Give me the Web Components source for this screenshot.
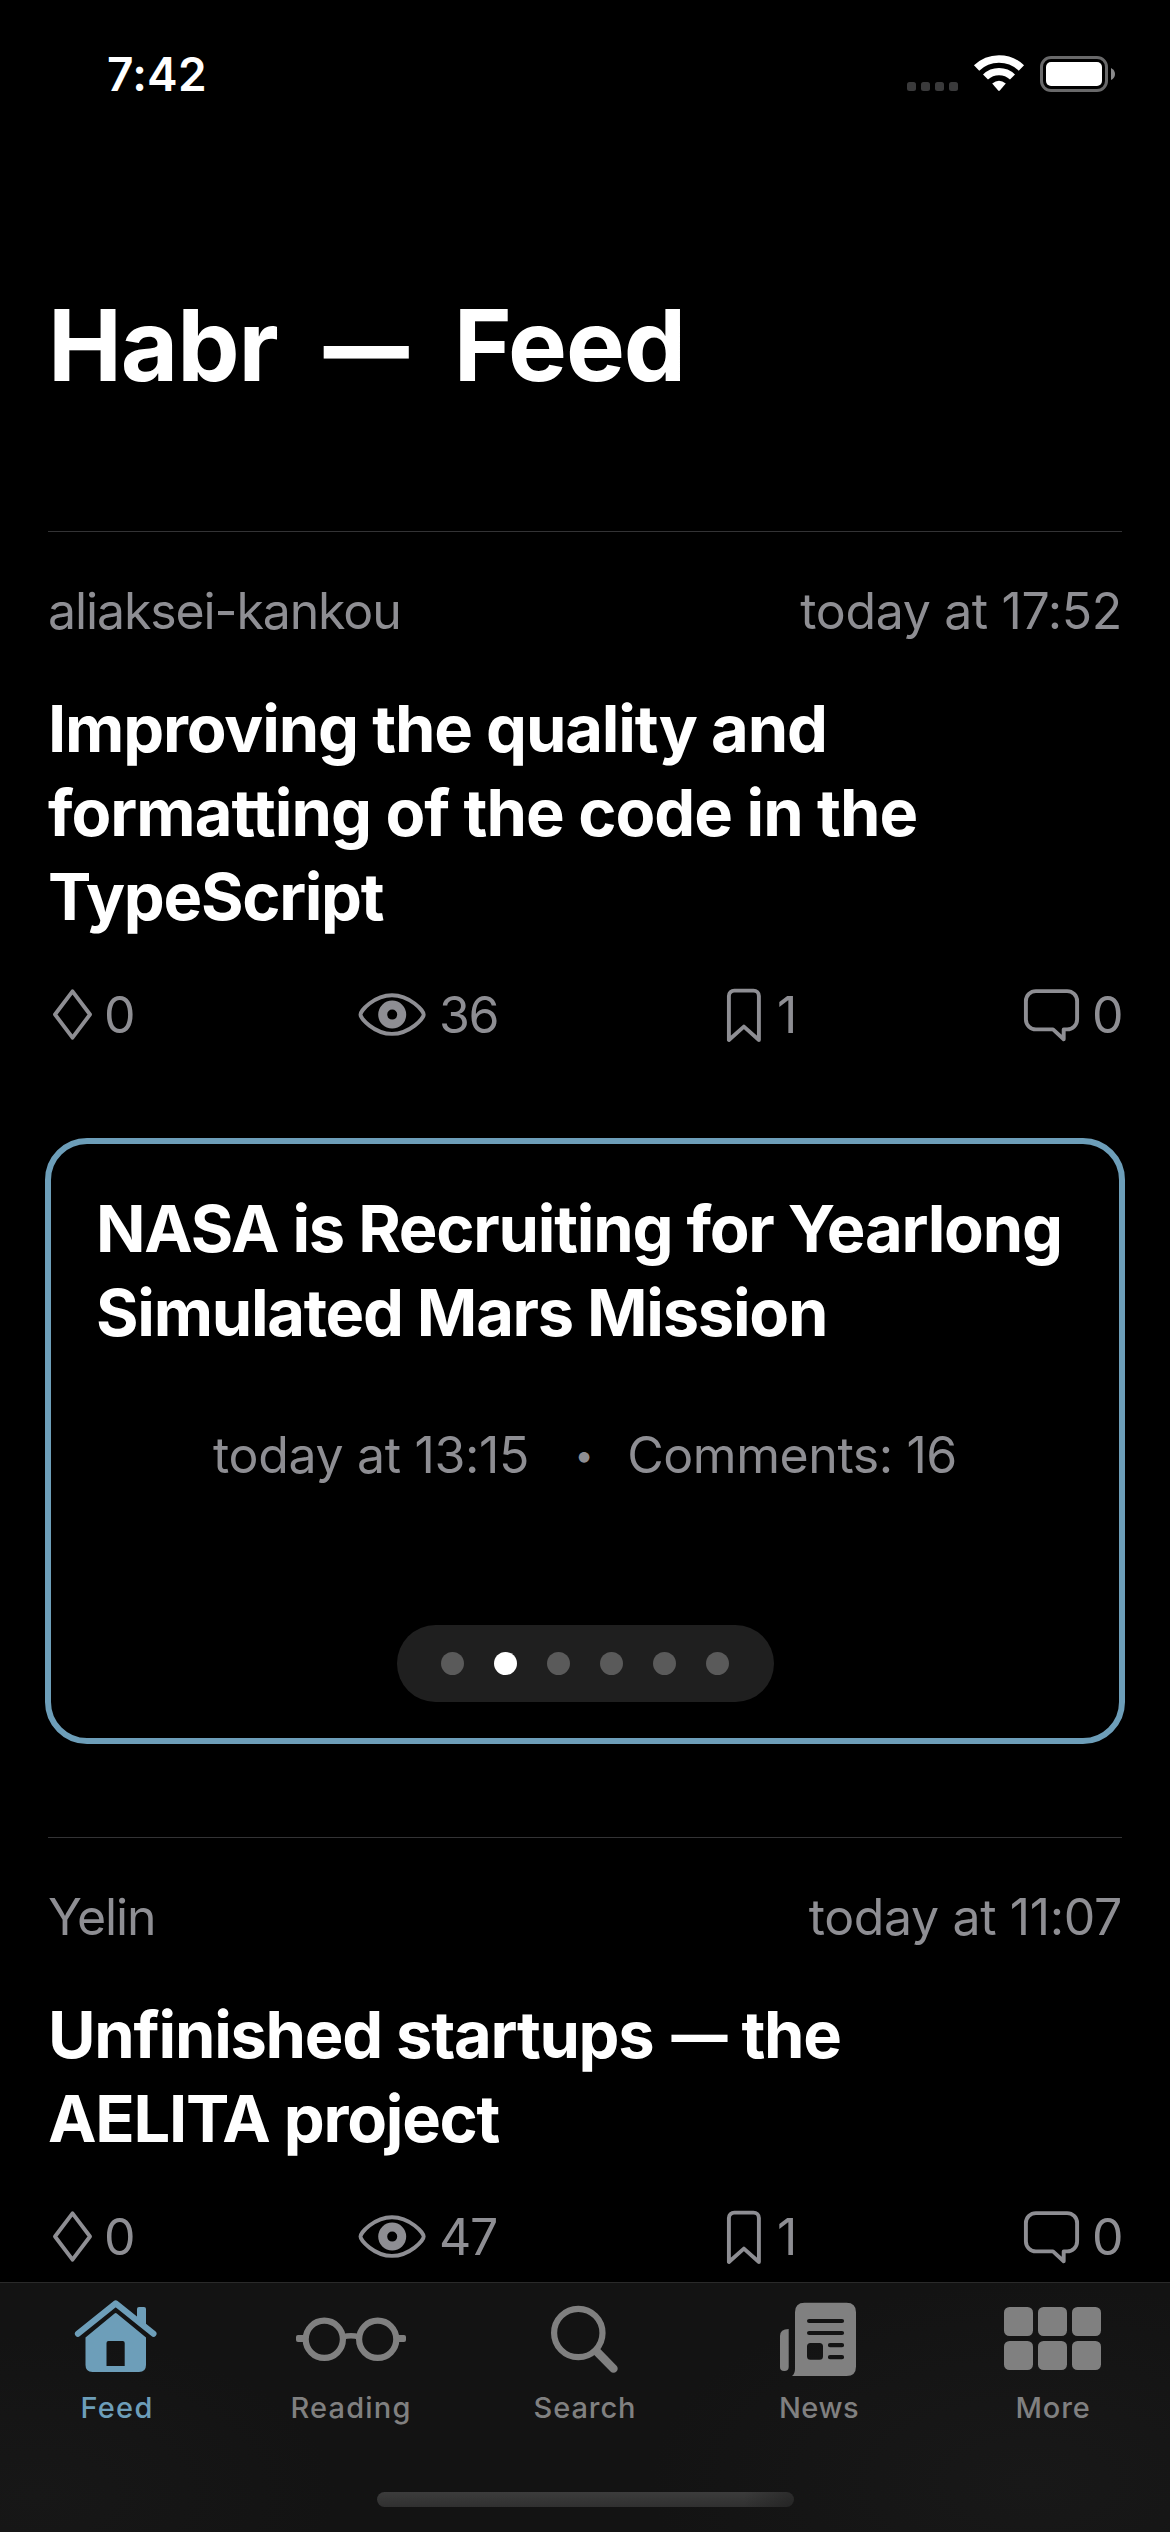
<!DOCTYPE html>
<html lang="en">
<head>
<meta charset="utf-8">
<title>Habr — Feed</title>
<style>
html,body{margin:0;background:#000}
body{width:1170px;height:2532px;overflow:hidden;font-family:Inter,"Liberation Sans",sans-serif;color:#fff}
</style>
</head>
<body>
<habr-app>
  <status-bar slot="status">7:42</status-bar>
  <page-title>Habr&nbsp; <span>—</span> &nbsp;Feed</page-title>
  <feed-article author="aliaksei-kankou" author-track="-1.12" time="today at 17:52" time-track="-0.36" votes="0" views="36" saves="1" comments="0">
    <title-line track="-1.15">Improving the quality and</title-line>
    <title-line track="-0.98">formatting of the code in the</title-line>
    <title-line track="-1.3">TypeScript</title-line>
  </feed-article>
  <news-card time="today at 13:15" comments="Comments: 16" pages="6" current="2">
    <title-line track="-1.23">NASA is Recruiting for Yearlong</title-line>
    <title-line track="-1.27">Simulated Mars Mission</title-line>
  </news-card>
  <feed-article author="Yelin" author-track="-1.12" time="today at 11:07" time-track="-0.36" votes="0" views="47" saves="1" comments="0">
    <title-line track="-1.28">Unfinished startups <span style="font-size:56px;font-weight:800;vertical-align:3px;line-height:0;margin:0 1px 0 4px">—</span> the</title-line>
    <title-line track="-1.25">AELITA project</title-line>
  </feed-article>
  <tab-bar slot="tabs">
    <tab-item icon="home" track="1.3" active>Feed</tab-item>
    <tab-item icon="glasses" track="1.19">Reading</tab-item>
    <tab-item icon="search" track="0.92">Search</tab-item>
    <tab-item icon="news" track="0.49">News</tab-item>
    <tab-item icon="grid" track="0.89">More</tab-item>
  </tab-bar>
</habr-app>
<script>
const define = (name, render) => customElements.define(name, class extends HTMLElement {
  constructor() {
    super();
    this.attachShadow({ mode: 'open' });
  }
  connectedCallback() {
    this.shadowRoot.innerHTML = render(this);
  }
});
const at = (el, name) => el.getAttribute(name) || '';

define('habr-app', () => `
<style>
:host{display:flex;flex-direction:column;width:1170px;height:2532px;background:#000}
main{flex:1;min-height:0;overflow:hidden;display:flex;flex-direction:column}
</style>
<slot name="status"></slot><main><slot></slot></main><slot name="tabs"></slot>`);

define('status-bar', () => `
<style>
:host{display:flex;justify-content:space-between;align-items:flex-start;box-sizing:border-box;height:141px;padding:53px 52px 0 107px}
time{font-size:46px;font-weight:600;line-height:42px;letter-spacing:.25px}
svg{display:block}
</style>
<time><slot></slot></time>
<svg width="211" height="40" viewBox="907 53 211 40" fill="none">
  <g fill="#3a3a3b"><rect x="907" y="82" width="9" height="9" rx="2.5"/><rect x="921" y="82" width="9" height="9" rx="2.5"/><rect x="935" y="82" width="9" height="9" rx="2.5"/><rect x="949" y="82" width="9" height="9" rx="2.5"/></g>
  <g stroke="#fff"><path stroke-width="7.6" d="M976.6 68A32.2 32.2 0 0 1 1021.4 68"/><path stroke-width="7.2" d="M985.5 77A19.5 19.5 0 0 1 1012.5 77"/></g>
  <path fill="#fff" d="M992.2 83.6Q999 77.8 1005.8 83.6L999.8 90.5Q999 91.3 998.2 90.5Z"/>
  <rect x="1041.5" y="57.5" width="65" height="33" rx="9.5" stroke="#69696a" stroke-width="3"/>
  <rect x="1046" y="62" width="56" height="24" rx="5" fill="#fff"/>
  <path fill="#8a8a8b" d="M1111 68Q1115 70 1115 74T1111 80Z"/>
</svg>`);

define('page-title', () => `
<style>
:host{display:block;margin:144px 48px 126px;font-size:99px;font-weight:700;line-height:120px;letter-spacing:-1.1px;word-spacing:.7px;white-space:nowrap}
::slotted(span){font-size:85px;font-weight:900;line-height:0;vertical-align:4px}
</style><slot></slot>`);

define('title-line', el => `
<style>:host{display:block;height:84px;font-size:65px;font-weight:700;line-height:84px;white-space:nowrap;letter-spacing:${at(el, 'track')}px}</style><slot></slot>`);

const statIcons = {
  votes: [56, '<path d="M24.5 6.3L42 29.5L24.5 52.7L7 29.5Z"/>'],
  views: [85, '<path d="M6.5 29.6C6.5 26 20 10.2 38 10.2S69.7 26 69.7 29.6 56 48.9 38 48.9 6.5 33.2 6.5 29.6Z"/><circle cx="38.2" cy="29.6" r="9.5" stroke-width="9"/>'],
  saves: [55, '<path d="M6.9 55V11a5.4 5.4 0 0 1 5.4-5.4H31.5A5.4 5.4 0 0 1 36.9 11V55L21.9 41.6Z"/>'],
  comments: [72, '<path d="M16 6.1H47A10 10 0 0 1 57.1 16V34.5A10 10 0 0 1 47 44.4H43.7V54.2L33 44.4H16A10 10 0 0 1 5.9 34.5V16A10 10 0 0 1 16 6.1Z"/>']
};

define('stat-item', el => {
  const [w, art] = statIcons[at(el, 'kind')];
  return `
<style>
:host{display:flex;height:60px;font-size:50px;line-height:60px;letter-spacing:-1.3px}
svg{display:block;flex:none}
</style>
<svg width="${w}" height="60" fill="none" stroke="currentColor" stroke-width="3.9" stroke-linejoin="round">${art}</svg><span><slot></slot></span>`;
});

define('feed-article', el => `
<style>
:host{display:flex;flex-direction:column;margin:0 48px;border-top:1px solid #333335}
header{display:flex;justify-content:space-between;margin-top:49px;font-size:50px;line-height:60px;color:#8e8e93}
h2{margin:46px 0}
footer{display:grid;grid-template-columns:306px 368px 298px 102px;color:#8e8e93}
</style>
<header><span style="letter-spacing:${at(el, 'author-track')}px">${at(el, 'author')}</span><time style="letter-spacing:${at(el, 'time-track')}px">${at(el, 'time')}</time></header>
<h2><slot></slot></h2>
<footer>${Object.keys(statIcons).map(k => `<stat-item kind="${k}">${at(el, k)}</stat-item>`).join('')}</footer>`);

define('page-dots', el => `
<style>
:host{display:flex;align-items:center;justify-content:center;gap:30px;width:377px;height:77px;border-radius:39px;background:#1f1f1f}
i{width:23px;height:23px;border-radius:50%;background:#5a5a5a}
i.on{background:#fff}
</style>${Array.from({ length: +at(el, 'pages') }, (_, i) => `<i${i + 1 === +at(el, 'current') ? ' class="on"' : ''}></i>`).join('')}`);

define('news-card', el => `
<style>
:host{display:flex;flex-direction:column;align-items:center;box-sizing:border-box;height:606px;margin:93px 45px;padding:43px 45px 0;border:6px solid #6d9eb9;border-radius:42px}
h2{align-self:stretch;margin:0 0 70px}
p{display:flex;margin:0 0 140px;font-size:50px;line-height:60px;color:#8e8e93;white-space:nowrap}
b{box-sizing:border-box;width:98px;padding-left:12px;font-weight:400;font-size:34px;text-align:center}
</style>
<h2><slot></slot></h2>
<p><span style="letter-spacing:-.34px">${at(el, 'time')}</span><b>•</b><span style="letter-spacing:-.42px">${at(el, 'comments')}</span></p>
<page-dots pages="${at(el, 'pages')}" current="${at(el, 'current')}"></page-dots>`);

define('tab-bar', () => `
<style>
:host{display:flex;flex-direction:column;align-items:center;box-sizing:border-box;height:250px;border-top:1px solid #2a2a2a;background:radial-gradient(300px 160px at 3% 85%,#171717,#17171700),radial-gradient(380px 200px at 88% 80%,#181818,#18181800),#131313}
nav{display:grid;grid-template-columns:repeat(5,234px)}
div{width:417px;height:15px;margin-top:67px;border-radius:8px;background:linear-gradient(90deg,#13131300 88%,#13131366),linear-gradient(#3c3c3c,#303030)}
</style>
<nav><slot></slot></nav><div></div>`);

const tabIcons = {
  home: '<path fill="none" stroke="currentColor" stroke-width="6.2" stroke-linecap="round" stroke-linejoin="round" d="M78 2333.7L115.7 2303.4L153.4 2333.7"/><path d="M137 2319V2309Q137 2307 139 2307H144Q146 2307 146 2309V2326Z"/><path fill-rule="evenodd" d="M114.6 2313.4Q115.7 2312.4 116.8 2313.4L146 2337.4V2365Q146 2372 139 2372H92.5Q85.5 2372 85.5 2365V2337.4ZM106.5 2366H124.7V2343Q124.7 2341 122.7 2341H108.5Q106.5 2341 106.5 2343Z"/>',
  glasses: '<g fill="none" stroke="currentColor"><circle cx="90.3" cy="2339.3" r="18.6" stroke-width="6.2"/><circle cx="143.7" cy="2339.3" r="18.6" stroke-width="6.2"/><path stroke-width="5.6" d="M109 2336.8Q117 2334.8 125 2336.8"/></g><rect x="62" y="2335" width="10" height="7" rx="2"/><rect x="162" y="2335" width="10" height="7" rx="2"/>',
  search: '<g fill="none" stroke="currentColor" stroke-linecap="round"><circle cx="110.3" cy="2333" r="24.2" stroke-width="6.2"/><path stroke-width="8.4" d="M129 2351.8L145.5 2368.6"/></g>',
  news: '<path fill-rule="evenodd" d="M102.5 2302.7H144.5Q154 2302.7 154 2312.2V2366.5Q154 2376 144.5 2376H90Q93 2373.5 93 2369V2312.2Q93 2302.7 102.5 2302.7ZM108.5 2343Q105 2343 105 2346.5V2356.2Q105 2359.7 108.5 2359.7H117.5Q121 2359.7 121 2356.2V2346.5Q121 2343 117.5 2343Z"/><path stroke="#131313" stroke-width="4.2" stroke-linecap="round" d="M107.1 2321H140M107.1 2333H140M128 2345.2H140M128 2357.2H140"/><path d="M86.7 2329V2367Q86.7 2371 82.3 2371T78 2367V2336Q78 2329 86.7 2329Z"/>',
  grid: [2307, 2341].map(y => [68, 102, 136].map(x => `<rect x="${x}" y="${y}" width="29" height="29" rx="5.5"/>`).join('')).join('')
};

define('tab-item', el => `
<style>
:host{display:flex;flex-direction:column;align-items:center;color:#808080}
:host([active]){color:#6d9eb9}
svg{display:block}
span{font-size:29px;font-weight:500;line-height:38px;margin-bottom:-2px;letter-spacing:${at(el, 'track')}px}
</style>
<svg width="234" height="106" viewBox="0 2283 234 106" fill="currentColor">${tabIcons[at(el, 'icon')]}</svg>
<span><slot></slot></span>`);
</script>
</body>
</html>
